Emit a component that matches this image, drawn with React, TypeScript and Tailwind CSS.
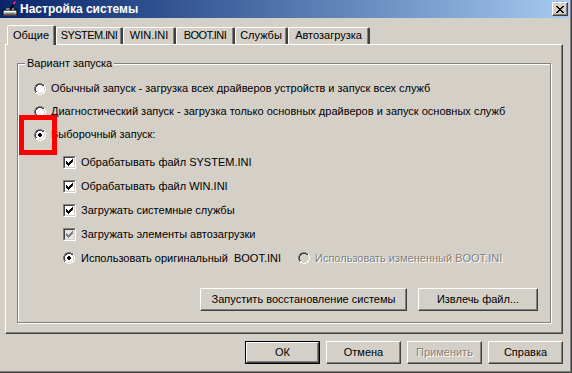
import React from "react";

const face = "#d4d0c8";

function Btn({ children, w, def, disabled }: { children: React.ReactNode; w: string; def?: boolean; disabled?: boolean }) {
  const inner = (
    <div className="flex h-full w-full items-center justify-center border border-t-white border-l-white border-r-[#404040] border-b-[#404040] shadow-[inset_-1px_-1px_0_#808080,inset_1px_1px_0_#d4d0c8]">
      <span className={disabled ? "text-[#808080] [text-shadow:1px_1px_0_#ffffff]" : "text-black"}>{children}</span>
    </div>
  );
  if (def) {
    return <div className={`h-[23px] ${w} border border-black`}>{inner}</div>;
  }
  return <div className={`h-[23px] ${w}`}>{inner}</div>;
}

function Radio({ checked, disabled }: { checked?: boolean; disabled?: boolean }) {
  return (
    <svg width="12" height="12" viewBox="0 0 12 12" className="shrink-0">
      <path d="M4 0h4v1h2v1h1v2h1v4h-1v2h-1v1h-2v1h-4v-1h-2v-1h-1v-2h-1v-4h1v-2h1v-1h2z" fill="#ffffff" />
      <path d="M4 0h4v1h2v1h-2v-1h-4v1h-2v2h-1v4h1v2h-1v-2h-1v-4h1v-2h1v-1h2z" fill="#808080" />
      <path d="M4 1h4v1h2v1h-2v-1h-4v1h-1v1h-1v4h1v1h-1v-1h-1v-4h1v-2h1v-1h1z" fill="#404040" />
      <path d="M10 2h1v2h1v4h-1v2h-1v1h-2v1h-4v-1h4v-1h2v-2h1v-4h-1z" fill="#ffffff" />
      <path d="M9 3h1v1h1v4h-1v1h-1v1h-1v1h-4v-1h4v-1h1v-1h1v-4h-1z" fill="#d4d0c8" />
      <path d="M4 2h4v1h1v1h1v4h-1v1h-1v1h-4v-1h-1v-1h-1v-4h1v-1h1z" fill={disabled ? face : "#ffffff"} />
      {checked && <path d="M5 4h2v1h1v2h-1v1h-2v-1h-1v-2h1z" fill={disabled ? "#808080" : "#000000"} />}
    </svg>
  );
}

function Check({ disabled }: { disabled?: boolean }) {
  return (
    <div className="h-[13px] w-[13px] shrink-0 border border-t-[#808080] border-l-[#808080] border-r-white border-b-white">
      <div className={`h-full w-full border border-t-[#404040] border-l-[#404040] border-r-[#d4d0c8] border-b-[#d4d0c8] ${disabled ? "bg-[#e8e6e2]" : "bg-white"}`}>
        <svg width="9" height="9" viewBox="0 0 9 9" className="block">
          <path d="M1 3h1v1h1v1h1v-1h1v-1h1v-1h1v-1h1v3h-1v1h-1v1h-1v1h-1v1h-1v-1h-1v-1h-1z" fill={disabled ? "#808080" : "#000000"} />
        </svg>
      </div>
    </div>
  );
}

function Tab({ label, w, selected, tight }: { label: string; w: string; selected?: boolean; tight?: boolean }) {
  const t = tight ? "tracking-[-0.6px]" : "";
  if (selected) {
    return (
      <div className={`relative z-10 -mb-px h-[20px] ${w} bg-[#d4d0c8] rounded-t-[2px] border-l border-t border-white border-r-2 border-r-[#404040] shadow-[inset_-1px_0_0_#808080] flex items-start justify-center pt-[3px] ${t}`}>
        {label}
      </div>
    );
  }
  return (
    <div className={`h-[17px] ${w} rounded-t-[2px] border-l border-t border-white border-r-2 border-r-[#404040] shadow-[inset_-1px_0_0_#808080] flex items-start justify-center pt-[1px] whitespace-nowrap ${t}`}>
      {label}
    </div>
  );
}

export default function App() {
  return (
    <div className="relative h-[373px] w-[572px] overflow-hidden font-['Liberation_Sans',Arial,sans-serif] text-[11px] leading-[13px] text-black">
      <div className="h-full w-full border-r border-b border-[#404040]">
        <div className="flex h-full w-full flex-col border-r border-b border-[#808080] bg-[#d4d0c8] pr-px pb-px">
          {/* title bar */}
          <div className="flex h-[18px] shrink-0 items-center bg-gradient-to-r from-[#0a246a] to-[#a6caf0]">
            <svg width="16" height="16" viewBox="0 0 16 16" className="ml-[2px] shrink-0">
              <rect x="1" y="9" width="14" height="5" fill="#c0c0c0" stroke="#000" strokeWidth="1" />
              <rect x="2" y="10" width="12" height="1" fill="#ffffff" />
              <rect x="3" y="12" width="10" height="1" fill="#808080" />
              <rect x="4" y="7" width="8" height="2" fill="#808080" />
              <path d="M8 9 L13 1" stroke="#000" strokeWidth="1.6" />
              <path d="M11.5 3.2 L13.2 0.5" stroke="#ff3399" strokeWidth="1.6" />
              <rect x="1" y="14" width="14" height="1" fill="#404040" />
            </svg>
            <span className="ml-[2px] text-[12px] font-bold text-white">Настройка системы</span>
            <div className="ml-auto mr-[1px] h-[14px] w-[16px] border border-t-white border-l-white border-r-[#404040] border-b-[#404040] bg-[#d4d0c8] shadow-[inset_-1px_-1px_0_#808080] flex items-center justify-center">
              <svg width="8" height="7" viewBox="0 0 8 7">
                <path d="M0 0h2v1h1v1h2v-1h1v-1h2v1h-1v1h-1v1h-1v1h1v1h1v1h1v1h-2v-1h-1v-1h-2v1h-1v1h-2v-1h1v-1h1v-1h1v-1h-1v-1h-1v-1h-1z" fill="#000" />
              </svg>
            </div>
          </div>

          {/* tabs */}
          <div className="ml-[7px] mt-[7px] flex h-[19px] items-end">
            <Tab label="Общие" w="w-[49px]" selected />
            <Tab label="SYSTEM.INI" w="w-[67px]" tight />
            <Tab label="WIN.INI" w="w-[53px]" />
            <Tab label="BOOT.INI" w="w-[59px]" tight />
            <Tab label="Службы" w="w-[53px]" />
            <Tab label="Автозагрузка" w="w-[82px]" />
          </div>

          {/* panel */}
          <div className="ml-[5px] h-[290px] w-[558px] border border-t-white border-l-white border-r-[#404040] border-b-[#404040] shadow-[inset_-1px_-1px_0_#808080] pt-[18px] pl-[11px]">
            <div className="relative h-[260px] w-[534px] border border-[#808080] shadow-[inset_1px_1px_0_#ffffff,1px_1px_0_#ffffff]">
              <div className="absolute left-[7px] top-[-7px] bg-[#d4d0c8] px-[2px]">Вариант запуска</div>
              <div className="flex flex-col pl-[16px] pt-[13px]">
                <div className="flex h-[23px] items-center gap-[5px]">
                  <Radio />
                  <span>Обычный запуск - загрузка всех драйверов устройств и запуск всех служб</span>
                </div>
                <div className="flex h-[23px] items-center gap-[5px]">
                  <Radio />
                  <span>Диагностический запуск - загрузка только основных драйверов и запуск основных служб</span>
                </div>
                <div className="flex h-[23px] items-center gap-[5px]">
                  <Radio checked />
                  <span>Выборочный запуск:</span>
                </div>
                <div className="ml-[29px] mt-[4px] flex flex-col">
                  <div className="flex h-[24px] items-center gap-[5px]">
                    <Check />
                    <span>Обрабатывать файл SYSTEM.INI</span>
                  </div>
                  <div className="flex h-[24px] items-center gap-[5px]">
                    <Check />
                    <span>Обрабатывать файл WIN.INI</span>
                  </div>
                  <div className="flex h-[24px] items-center gap-[5px]">
                    <Check />
                    <span>Загружать системные службы</span>
                  </div>
                  <div className="flex h-[24px] items-center gap-[5px]">
                    <Check disabled />
                    <span>Загружать элементы автозагрузки</span>
                  </div>
                  <div className="flex h-[24px] items-center">
                    <div className="flex w-[235px] items-center gap-[6px]">
                      <Radio checked />
                      <span>Использовать оригинальный&nbsp; BOOT.INI</span>
                    </div>
                    <div className="flex items-center gap-[5px]">
                      <Radio disabled />
                      <span className="text-[#808080] [text-shadow:1px_1px_0_#ffffff]">Использовать измененный BOOT.INI</span>
                    </div>
                  </div>
                </div>
                <div className="mt-[18px] flex justify-end gap-[11px] pr-[12px]">
                  <Btn w="w-[207px]">Запустить восстановление системы</Btn>
                  <Btn w="w-[120px]">Извлечь файл...</Btn>
                </div>
              </div>
            </div>
          </div>

          {/* bottom buttons */}
          <div className="mt-[7px] flex justify-end gap-[6px] pr-[6px]">
            <Btn w="w-[75px]" def>ОК</Btn>
            <Btn w="w-[75px]">Отмена</Btn>
            <Btn w="w-[75px]" disabled>Применить</Btn>
            <Btn w="w-[75px]">Справка</Btn>
          </div>
        </div>
      </div>

      {/* red highlight annotation */}
      <div className="pointer-events-none absolute left-[19px] top-[115px] h-[40px] w-[38px] border-[5px] border-[#ff0000]" />
    </div>
  );
}
